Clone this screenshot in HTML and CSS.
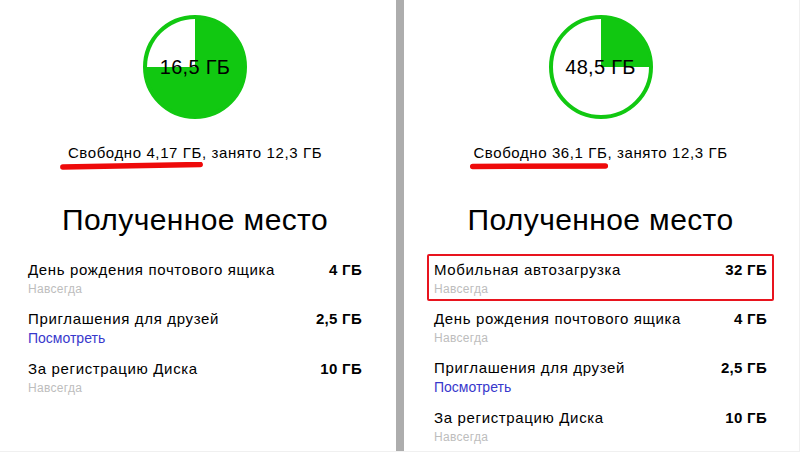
FILE: index.html
```html
<!DOCTYPE html>
<html lang="ru">
<head>
    <meta charset="UTF-8">
    <title>Место на Диске</title>
    <link rel="stylesheet" href="styles.css">
</head>
<body>
    <div class="page">
        <section class="panel panel-left">
            <div class="chart">
                <svg class="pie" width="106" height="106" viewBox="0 0 106 106">
                    <circle cx="53" cy="53" r="50" fill="#11c811" stroke="#11c811" stroke-width="4"/>
                    <path d="M53 53 V5 A48 48 0 0 0 5 53 Z" fill="#fff"/>
                </svg>
                <span class="chart-label">16,5 ГБ</span>
            </div>
            <p class="summary"><span class="mark mark-wide">Свободно 4,17 ГБ<svg class="brush" viewBox="0 0 150 8" preserveAspectRatio="none"><path d="M4 5 Q60 4 146 2.5" /></svg></span>, занято 12,3 ГБ</p>
            <h2>Полученное место</h2>
            <ul class="bonus-list">
                <li>
                    <div class="bonus-row"><span class="bonus-name">День рождения почтового ящика</span><span class="bonus-size">4 ГБ</span></div>
                    <div class="bonus-note">Навсегда</div>
                </li>
                <li>
                    <div class="bonus-row"><span class="bonus-name">Приглашения для друзей</span><span class="bonus-size">2,5 ГБ</span></div>
                    <a class="bonus-link" href="#">Посмотреть</a>
                </li>
                <li>
                    <div class="bonus-row"><span class="bonus-name">За регистрацию Диска</span><span class="bonus-size">10 ГБ</span></div>
                    <div class="bonus-note">Навсегда</div>
                </li>
            </ul>
        </section>

        <div class="divider"></div>

        <section class="panel panel-right">
            <div class="chart">
                <svg class="pie" width="106" height="106" viewBox="0 0 106 106">
                    <circle cx="53" cy="53" r="50" fill="#fff" stroke="#11c811" stroke-width="4"/>
                    <path d="M53 53 V4 A49 49 0 0 1 102 53 Z" fill="#11c811"/>
                </svg>
                <span class="chart-label">48,5 ГБ</span>
            </div>
            <p class="summary"><span class="mark">Свободно 36,1 ГБ<svg class="brush" viewBox="0 0 150 8" preserveAspectRatio="none"><path d="M4 4.5 Q70 4.5 146 4" /></svg></span>, занято 12,3 ГБ</p>
            <h2>Полученное место</h2>
            <ul class="bonus-list">
                <li class="highlight">
                    <div class="bonus-row"><span class="bonus-name">Мобильная автозагрузка</span><span class="bonus-size">32 ГБ</span></div>
                    <div class="bonus-note">Навсегда</div>
                </li>
                <li>
                    <div class="bonus-row"><span class="bonus-name">День рождения почтового ящика</span><span class="bonus-size">4 ГБ</span></div>
                    <div class="bonus-note">Навсегда</div>
                </li>
                <li>
                    <div class="bonus-row"><span class="bonus-name">Приглашения для друзей</span><span class="bonus-size">2,5 ГБ</span></div>
                    <a class="bonus-link" href="#">Посмотреть</a>
                </li>
                <li>
                    <div class="bonus-row"><span class="bonus-name">За регистрацию Диска</span><span class="bonus-size">10 ГБ</span></div>
                    <div class="bonus-note">Навсегда</div>
                </li>
            </ul>
        </section>
    </div>
</body>
</html>
```

FILE: styles.css
```css
body {
    margin: 0;
    font-family: "Liberation Sans", Arial, sans-serif;
    color: #000;
    background: #fff;
}
.page {
    display: flex;
    height: 452px;
    overflow: hidden;
    border-bottom: 1px solid #f0f0f0;
    box-sizing: border-box;
}
.panel {
    box-sizing: border-box;
    width: 396px;
    flex: none;
}
.panel-left {
    padding: 0 34px 0 28px;
}
.panel-right {
    padding: 0 32px 0 30px;
    border-right: 1px solid #f0f0f0;
}
.divider {
    width: 8px;
    flex: none;
    background: #adadad;
}
.chart {
    position: relative;
    height: 106px;
    margin-top: 14px;
    display: flex;
    justify-content: center;
}
.chart-label {
    position: absolute;
    left: 0;
    right: 0;
    top: 41px;
    text-align: center;
    font-size: 20px;
    line-height: 24px;
    letter-spacing: 0.3px;
}
.summary {
    margin: 24px 0 0;
    text-align: center;
    font-size: 15px;
    line-height: 18px;
    letter-spacing: 0.6px;
}
.mark {
    position: relative;
}
.brush {
    position: absolute;
    left: -4px;
    top: calc(100% + 1px);
    height: 8px;
    width: calc(100% + 6px);
}
.mark-wide .brush {
    left: -9px;
    width: calc(100% + 11px);
}
.brush path {
    fill: none;
    stroke: #ee0a0a;
    stroke-width: 5.5;
    stroke-linecap: round;
    vector-effect: non-scaling-stroke;
}
h2 {
    margin: 40px 0 0;
    text-align: center;
    font-size: 30px;
    line-height: 36px;
    font-weight: normal;
    letter-spacing: 0.4px;
}
.bonus-list {
    list-style: none;
    margin: 23px 0 0;
    padding: 0;
}
.bonus-list li {
    margin-bottom: 13px;
}
.bonus-list li.highlight {
    margin: -7px -7px 9px;
    padding: 5px 5px 2px;
    border: 2px solid #e8141e;
    border-radius: 2px;
}
.bonus-row {
    display: flex;
    justify-content: space-between;
    font-size: 15px;
    line-height: 18px;
    letter-spacing: 0.65px;
}
.bonus-size {
    font-weight: bold;
    letter-spacing: 0.3px;
}
.bonus-note {
    margin-top: 2px;
    font-size: 12px;
    line-height: 16px;
    color: #bdbdbd;
    letter-spacing: 0.3px;
}
.bonus-link {
    display: inline-block;
    margin-top: 2px;
    font-size: 14px;
    line-height: 16px;
    color: #3838cc;
    text-decoration: none;
}
```
